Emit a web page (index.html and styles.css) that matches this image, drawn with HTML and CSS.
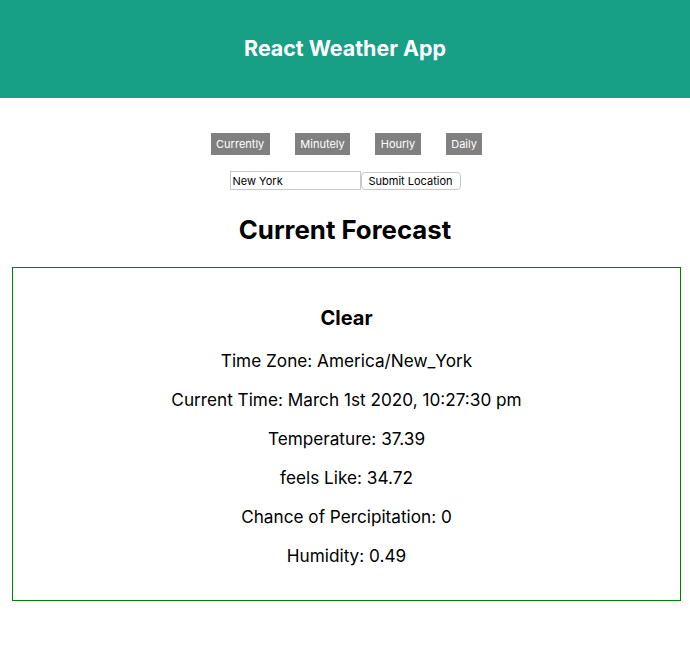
FILE: index.html
```html
<!DOCTYPE html>
<html>
<head>
<meta charset="utf-8">
<link rel="stylesheet" href="styles.css">
</head>
<body>
<header class="app-header">
  <h1 class="app-title">React Weather App</h1>
</header>
<nav class="tabs">
  <button class="tab">Currently</button>
  <button class="tab">Minutely</button>
  <button class="tab">Hourly</button>
  <button class="tab">Daily</button>
</nav>
<form class="location-form">
  <input class="location-input" type="text" value="New York">
  <button class="submit-btn" type="button">Submit Location</button>
</form>
<h2 class="section-title">Current Forecast</h2>
<section class="forecast-card">
  <h3 class="summary">Clear</h3>
  <p class="detail">Time Zone: America/New_York</p>
  <p class="detail">Current Time: March 1st 2020, 10:27:30 pm</p>
  <p class="detail">Temperature: 37.39</p>
  <p class="detail">feels Like: 34.72</p>
  <p class="detail">Chance of Percipitation: 0</p>
  <p class="detail">Humidity: 0.49</p>
</section>
</body>
</html>
```
FILE: styles.css
```css
* { box-sizing: border-box; }
body {
  margin: 0;
  font-family: Inter, "Noto Sans", sans-serif;
  color: #000;
  background: #fff;
}
.app-header {
  height: 98px;
  background: #17a086;
  display: flex;
  align-items: center;
  justify-content: center;
}
.app-title {
  margin: 0 0 3px;
  color: #fff;
  font-family: Inter, sans-serif;
  font-size: 21.4px;
  font-weight: 700;
}
.tabs {
  display: flex;
  justify-content: center;
  gap: 25px;
  margin-top: 35px;
  padding-left: 3px;
}
.tab {
  background: #808080;
  color: #fff;
  border: none;
  font-family: Inter, sans-serif;
  font-size: 11px;
  height: 22px;
  padding: 0 5.5px;
}
.location-form {
  display: flex;
  justify-content: center;
  margin-top: 16px;
}
.location-input {
  width: 131px;
  height: 19px;
  border: 1px solid #c8c8c8;
  padding: 0 2px;
  font-family: Inter, sans-serif;
  font-size: 11px;
}
.submit-btn {
  height: 18px;
  margin-top: 1px;
  width: 100px;
  background: #fff;
  border: 1px solid #c8c8c8;
  border-radius: 4px;
  font-family: Inter, sans-serif;
  font-size: 11px;
  padding: 0;
}
.section-title {
  margin: 24px 0 0;
  text-align: center;
  font-family: Inter, sans-serif;
  font-size: 25.8px;
  font-weight: 700;
  line-height: 32px;
}
.forecast-card {
  margin: 21px 9px 0 12px;
  border: 1px solid #008000;
  text-align: center;
  padding: 37px 0 25px;
}
.summary {
  margin: 0 0 10px;
  font-family: Inter, sans-serif;
  font-size: 20px;
  font-weight: 700;
  line-height: 26px;
}
.detail {
  margin: 0;
  font-size: 17.2px;
  line-height: 39px;
}
```
